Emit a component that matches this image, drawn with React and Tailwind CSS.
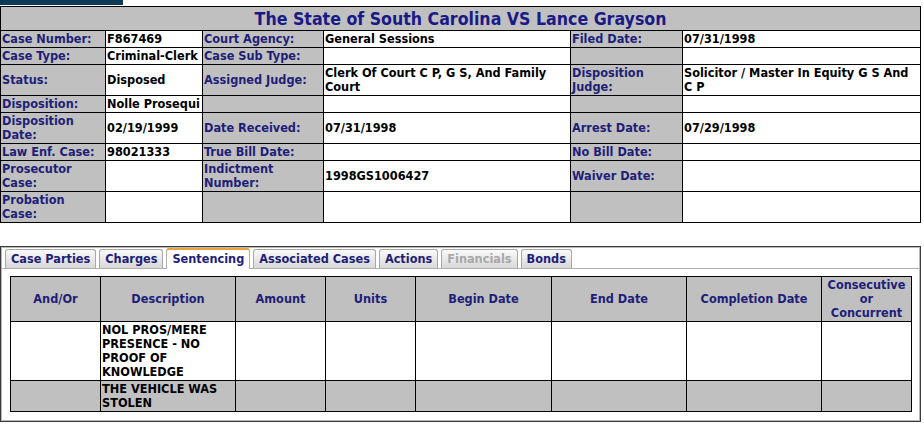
import React from "react";

const font = "font-['DejaVu_Sans_Condensed','DejaVu_Sans',sans-serif]";

const Label = ({ children }) => (
  <td className="border border-black bg-[#c0c0c0] px-[1px] py-[1px] align-middle text-[#1e1e78]">{children}</td>
);

const Value = ({ children }) => (
  <td className="border border-black bg-white px-[1px] py-[1px] align-middle text-black">{children}</td>
);

const caseRows = [
  ["Case Number:", "F867469", "Court Agency:", "General Sessions", "Filed Date:", "07/31/1998"],
  ["Case Type:", "Criminal-Clerk", "Case Sub Type:", "", "", ""],
  ["Status:", "Disposed", "Assigned Judge:", "Clerk Of Court C P, G S, And Family Court", "Disposition Judge:", "Solicitor / Master In Equity G S And C P"],
  ["Disposition:", "Nolle Prosequi", "", "", "", ""],
  ["Disposition Date:", "02/19/1999", "Date Received:", "07/31/1998", "Arrest Date:", "07/29/1998"],
  ["Law Enf. Case:", "98021333", "True Bill Date:", "", "No Bill Date:", ""],
  ["Prosecutor Case:", "", "Indictment Number:", "1998GS1006427", "Waiver Date:", ""],
  [<>Probation<br />Case:</>, "", "", "", "", ""],
];

const tabs = ["Case Parties", "Charges", "Sentencing", "Associated Cases", "Actions", "Financials", "Bonds"];

const headers = ["And/Or", "Description", "Amount", "Units", "Begin Date", "End Date", "Completion Date", "Consecutive or Concurrent"];
const colW = [90, 135, 90, 90, 136, 135, 135, 90];

const sentences = [
  { desc: "NOL PROS/MERE PRESENCE - NO PROOF OF KNOWLEDGE", bg: "bg-white" },
  { desc: "THE VEHICLE WAS STOLEN", bg: "bg-[#c0c0c0]" },
];

export default function App() {
  return (
    <div className={`${font} w-[924px] h-[428px] bg-white text-[12.6px] leading-[14px] font-bold overflow-hidden`}>
      <div className="w-[123px] h-[5px] bg-[#0d3a56]" />
      <table className="mt-[1px] w-[920px] table-fixed border-collapse border border-black">
        <colgroup>
          <col className="w-[105px]" />
          <col className="w-[97px]" />
          <col className="w-[121px]" />
          <col className="w-[247px]" />
          <col className="w-[112px]" />
          <col className="w-[238px]" />
        </colgroup>
        <tbody>
          <tr>
            <td colSpan={6} className="border border-black bg-[#c0c0c0] h-[24px] text-center align-middle text-[17.6px] leading-[22px] text-[#1a1a86]">
              The State of South Carolina VS Lance Grayson
            </td>
          </tr>
          {caseRows.map((r, i) => (
            <tr key={i}>
              <Label>{r[0]}</Label>
              <Value>{r[1]}</Value>
              <Label>{r[2]}</Label>
              <Value>{r[3]}</Value>
              <Label>{r[4]}</Label>
              <Value>{r[5]}</Value>
            </tr>
          ))}
        </tbody>
      </table>

      <div className="mt-[23px] w-[921px] h-[176px] border border-[#3a3a3a] shadow-[inset_0_0_0_1px_#b8b8b8]">
        <div className="flex items-end gap-[3px] pl-[3px] pt-[1px] border-b border-[#b0b0b0] mx-[1px]">
          {tabs.map((t) => {
            const active = t === "Sentencing";
            const disabled = t === "Financials";
            return (
              <div
                key={t}
                className={`px-[5px] rounded-t-[3px] border border-b-0 ${
                  active
                    ? "bg-white border-[#b0b0b0] border-t-2 border-t-[#e8a33a] h-[21px] pt-[2px] -mb-px"
                    : "bg-gradient-to-b from-[#fafafa] to-[#d8d8d8] border-[#a8a8a8] h-[19px] pt-[2px]"
                } ${disabled ? "text-[#a8a8a8]" : "text-[#1e1e78]"}`}
              >
                {t}
              </div>
            );
          })}
        </div>
        <table className="ml-[9px] mt-[7px] w-[902px] table-fixed border-collapse border border-black">
          <colgroup>
            {colW.map((w, i) => (
              <col key={i} style={{ width: w }} />
            ))}
          </colgroup>
          <thead>
            <tr>
              {headers.map((h) => (
                <th key={h} className="border border-black bg-[#c0c0c0] h-[45px] px-[2px] text-center align-middle text-[#1e1e78] font-bold">
                  {h === "Consecutive or Concurrent" ? (
                    <>Consecutive<br />or<br />Concurrent</>
                  ) : (
                    h
                  )}
                </th>
              ))}
            </tr>
          </thead>
          <tbody>
            {sentences.map((s, i) => (
              <tr key={i} className={s.bg}>
                <td className="border border-black" />
                <td className="border border-black px-[1px] py-[1px] text-left align-top text-black">{s.desc}</td>
                <td className="border border-black" />
                <td className="border border-black" />
                <td className="border border-black" />
                <td className="border border-black" />
                <td className="border border-black" />
                <td className="border border-black" />
              </tr>
            ))}
          </tbody>
        </table>
      </div>
    </div>
  );
}
